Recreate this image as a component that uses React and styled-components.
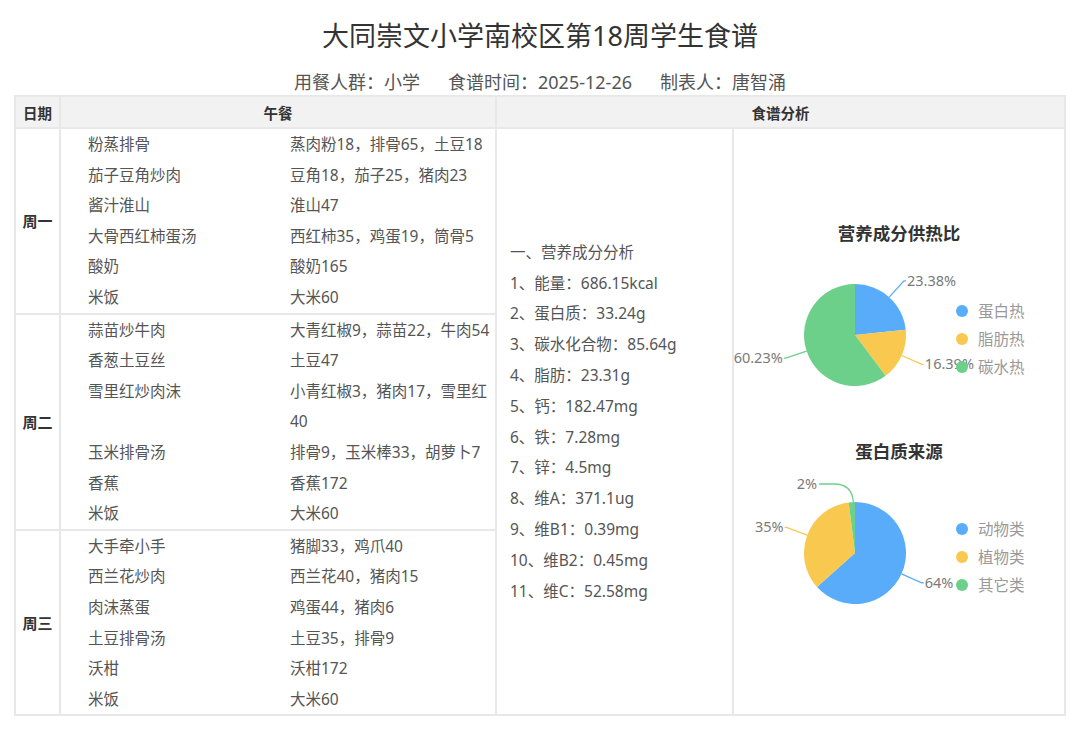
import React from 'react';
import styled, { createGlobalStyle } from 'styled-components';

const GlobalStyle = createGlobalStyle`
  body {
    margin: 0;
    background: #fff;
    font-family: 'Noto Sans', 'Noto Sans CJK SC', sans-serif;
  }
`;

const Page = styled.div`
  width: 1080px;
  padding-top: 16px;
  box-sizing: border-box;
`;

const Title = styled.h1`
  margin: 0;
  height: 40px;
  line-height: 40px;
  text-align: center;
  font-size: 27px;
  font-weight: 400;
  color: #333;
`;

const Meta = styled.div`
  margin-top: 13px;
  height: 26px;
  display: flex;
  justify-content: center;
  gap: 28px;
  line-height: 26px;
  font-size: 18px;
  color: #555;
`;

const Table = styled.div`
  margin: 0 14px;
  display: grid;
  grid-template-columns: 43px 434px 235px 1fr;
  grid-template-rows: 30px auto auto auto;
  gap: 2px;
  border: 2px solid #e8e8e8;
  background: #e8e8e8;
`;

const HeadCell = styled.div`
  grid-column: ${props => props.span ? `span ${props.span}` : 'auto'};
  display: flex;
  align-items: center;
  justify-content: center;
  background: #f2f2f2;
  font-size: 14.5px;
  font-weight: 700;
  color: #333;
`;

const DayCell = styled.div`
  display: flex;
  align-items: center;
  justify-content: center;
  background: #fff;
  font-size: 15px;
  font-weight: 700;
  color: #333;
`;

const MealCell = styled.div`
  padding-left: 27px;
  display: grid;
  grid-template-columns: 202px 1fr;
  background: #fff;
  font-size: 15.5px;
  line-height: 30.6px;
  color: #555;
`;

const Dish = styled.div``;

const Ingredients = styled.div``;

const AnalysisCell = styled.div`
  grid-column: 3;
  grid-row: 2 / span 3;
  padding-left: 13px;
  display: flex;
  align-items: center;
  background: #fff;
`;

const AnalysisList = styled.div`
  font-size: 15.5px;
  line-height: 30.8px;
  color: #555;
`;

const ChartCell = styled.div`
  grid-column: 4;
  grid-row: 2 / span 3;
  display: flex;
  flex-direction: column;
  justify-content: center;
  background: #fff;
`;

const ChartSvg = styled.svg`
  display: block;
  font-family: 'Noto Sans', 'Noto Sans CJK SC', sans-serif;
`;

const week = [
  { day: '周一', dishes: [
    ['粉蒸排骨', '蒸肉粉18，排骨65，土豆18'],
    ['茄子豆角炒肉', '豆角18，茄子25，猪肉23'],
    ['酱汁淮山', '淮山47'],
    ['大骨西红柿蛋汤', '西红柿35，鸡蛋19，筒骨5'],
    ['酸奶', '酸奶165'],
    ['米饭', '大米60'],
  ] },
  { day: '周二', dishes: [
    ['蒜苗炒牛肉', '大青红椒9，蒜苗22，牛肉54'],
    ['香葱土豆丝', '土豆47'],
    ['雪里红炒肉沫', '小青红椒3，猪肉17，雪里红40'],
    ['玉米排骨汤', '排骨9，玉米棒33，胡萝卜7'],
    ['香蕉', '香蕉172'],
    ['米饭', '大米60'],
  ] },
  { day: '周三', dishes: [
    ['大手牵小手', '猪脚33，鸡爪40'],
    ['西兰花炒肉', '西兰花40，猪肉15'],
    ['肉沫蒸蛋', '鸡蛋44，猪肉6'],
    ['土豆排骨汤', '土豆35，排骨9'],
    ['沃柑', '沃柑172'],
    ['米饭', '大米60'],
  ] },
];

const analysis = [
  '一、营养成分分析',
  '1、能量：686.15kcal',
  '2、蛋白质：33.24g',
  '3、碳水化合物：85.64g',
  '4、脂肪：23.31g',
  '5、钙：182.47mg',
  '6、铁：7.28mg',
  '7、锌：4.5mg',
  '8、维A：371.1ug',
  '9、维B1：0.39mg',
  '10、维B2：0.45mg',
  '11、维C：52.58mg',
];

const BLUE = '#58acf9';
const YELLOW = '#f8c84f';
const GREEN = '#6ccf8a';

const heatChart = {
  title: '营养成分供热比',
  slices: [
    { name: '蛋白热', value: 23.38, label: '23.38%', color: BLUE },
    { name: '脂肪热', value: 16.39, label: '16.39%', color: YELLOW },
    { name: '碳水热', value: 60.23, label: '60.23%', color: GREEN },
  ],
};

const proteinChart = {
  title: '蛋白质来源',
  slices: [
    { name: '动物类', value: 64, label: '64%', color: BLUE },
    { name: '植物类', value: 35, label: '35%', color: YELLOW },
    // tiny slice: label pulled up-left with a curved line, as echarts does
    { name: '其它类', value: 2, label: '2%', color: GREEN,
      line: 'M119.4 80 Q118 62 100 62 L85 62', text: [83, 61] },
  ],
};

const CX = 121;
const CY = 131;
const R = 51;

const PieChart = ({ title, slices }) => {
  const total = slices.reduce((s, d) => s + d.value, 0);
  let angle = -Math.PI / 2;
  const pt = (a, r) => [CX + r * Math.cos(a), CY + r * Math.sin(a)];

  const parts = slices.map(d => {
    const sweep = (d.value / total) * Math.PI * 2;
    const a0 = angle;
    const a1 = angle + sweep;
    angle = a1;
    const [x0, y0] = pt(a0, R);
    const [x1, y1] = pt(a1, R);
    const large = sweep > Math.PI ? 1 : 0;
    const arc = `M${CX} ${CY} L${x0} ${y0} A${R} ${R} 0 ${large} 1 ${x1} ${y1} Z`;

    const mid = (a0 + a1) / 2;
    const [ex, ey] = pt(mid, R);
    const [mx, my] = pt(mid, R + 22);
    const dir = Math.cos(mid) >= 0 ? 1 : -1;
    const line = d.line ?? `M${ex} ${ey} L${mx} ${my} L${mx + dir * 2} ${my}`;
    const text = d.text ?? [mx + dir * 3, my - 1];
    const anchor = d.text ? 'end' : dir > 0 ? 'start' : 'end';
    return { ...d, arc, line, text, anchor };
  });

  return (
    <ChartSvg width="330" height="218" viewBox="0 0 330 218">
      <text x="165" y="29" textAnchor="middle" dominantBaseline="central"
        fontSize="17.5" fontWeight="700" fill="#333">{title}</text>
      {parts.map(p => <path key={p.name} d={p.arc} fill={p.color} />)}
      {parts.map(p => (
        <g key={p.name + '-label'}>
          <path d={p.line} fill="none" stroke={p.color} strokeWidth="1.3" />
          <text x={p.text[0]} y={p.text[1]} textAnchor={p.anchor}
            dominantBaseline="central" fontSize="14.5" fill="#7a7a7a">{p.label}</text>
        </g>
      ))}
      {parts.map((p, i) => (
        <g key={p.name + '-legend'}>
          <circle cx="228" cy={107 + i * 28} r="6" fill={p.color} />
          <text x="244" y={107 + i * 28} dominantBaseline="central"
            fontSize="15.5" fill="#999">{p.name}</text>
        </g>
      ))}
    </ChartSvg>
  );
};

export default function App() {
  return (
    <Page>
      <GlobalStyle />
      <Title>大同崇文小学南校区第18周学生食谱</Title>
      <Meta>
        <span>用餐人群：小学</span>
        <span>食谱时间：2025-12-26</span>
        <span>制表人：唐智涌</span>
      </Meta>
      <Table>
        <HeadCell>日期</HeadCell>
        <HeadCell>午餐</HeadCell>
        <HeadCell span={2}>食谱分析</HeadCell>

        {week.map((w, i) => (
          <React.Fragment key={w.day}>
            <DayCell style={{ gridRow: i + 2 }}>{w.day}</DayCell>
            <MealCell style={{ gridRow: i + 2 }}>
              {w.dishes.map(([dish, ing], j) => (
                <React.Fragment key={j}>
                  <Dish>{dish}</Dish>
                  <Ingredients>{ing}</Ingredients>
                </React.Fragment>
              ))}
            </MealCell>
          </React.Fragment>
        ))}

        <AnalysisCell>
          <AnalysisList>
            {analysis.map(line => <div key={line}>{line}</div>)}
          </AnalysisList>
        </AnalysisCell>
        <ChartCell>
          <PieChart {...heatChart} />
          <PieChart {...proteinChart} />
        </ChartCell>
      </Table>
    </Page>
  );
}
